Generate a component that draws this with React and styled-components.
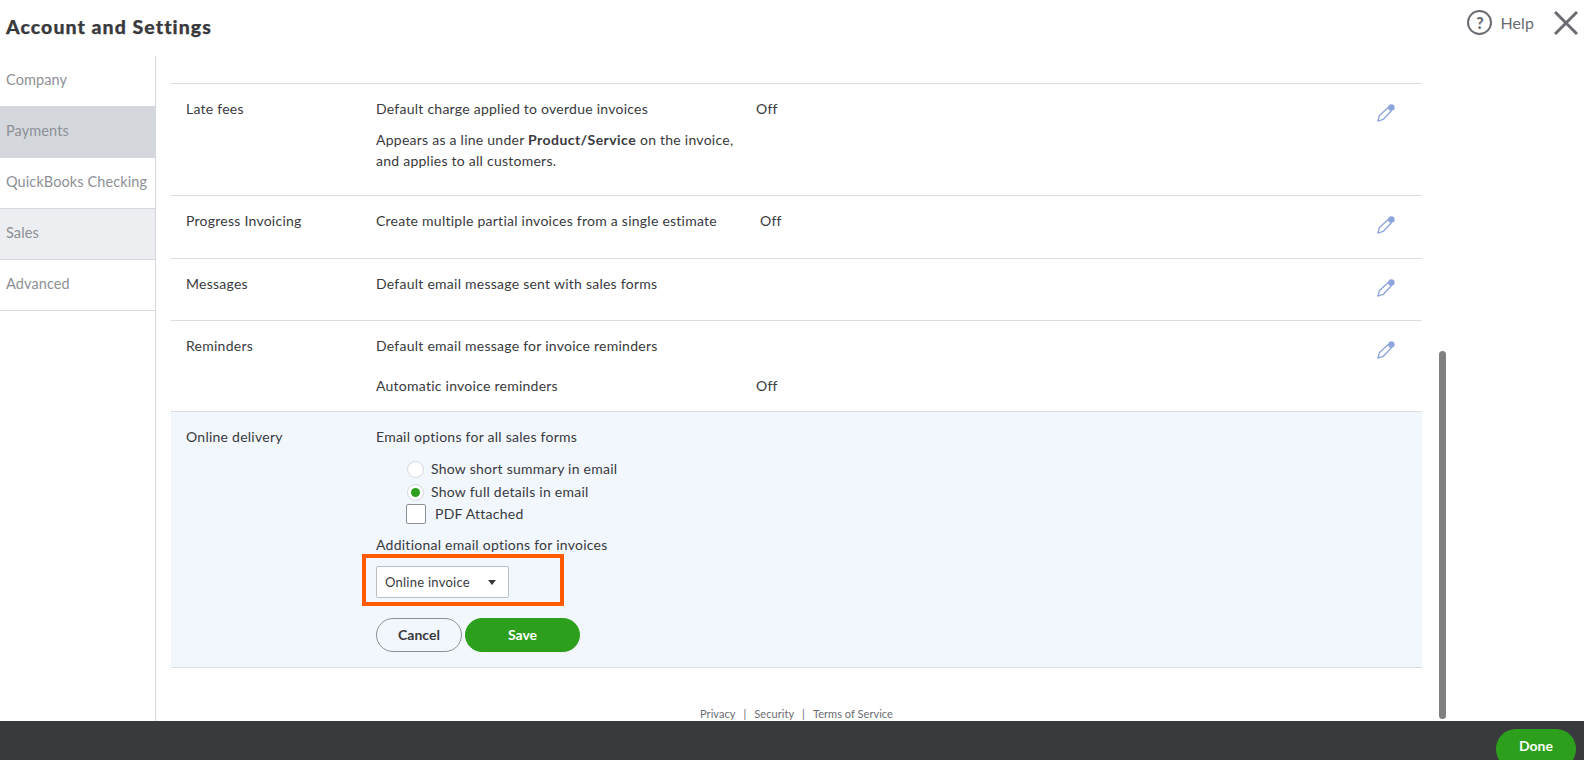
import React from 'react'
import styled, { createGlobalStyle } from 'styled-components'

const GlobalStyle = createGlobalStyle`
  html, body {
    margin: 0;
    padding: 0;
    height: 100%;
    background: #fff;
    font-family: Lato, "Open Sans", sans-serif;
    color: #393a3d;
  }
  * { box-sizing: border-box; }
`

const Page = styled.div`
  height: 100vh;
  display: flex;
  flex-direction: column;
  overflow: hidden;
`

const Header = styled.header`
  height: 56px;
  flex: none;
  display: flex;
  align-items: flex-start;
  justify-content: space-between;
  padding: 16px 6px 0 6px;
`

const Title = styled.h1`
  margin: 0;
  font-size: 19.5px;
  line-height: 22px;
  font-weight: 900;
  letter-spacing: 1.05px;
  -webkit-text-stroke: 0.25px #393a3d;
  color: #393a3d;
`

const HeaderActions = styled.div`
  display: flex;
  align-items: center;
  margin-top: -6px;
`

const HelpIcon = styled.span`
  width: 25px;
  height: 25px;
  border: 2px solid #6b6c72;
  border-radius: 50%;
  display: flex;
  align-items: center;
  justify-content: center;
  color: #6b6c72;
  font-size: 16px;
  font-weight: 900;
  margin-right: 8px;
`

const HelpLabel = styled.span`
  font-size: 16px;
  letter-spacing: 0.1px;
  color: #6b6c72;
  margin-right: 20px;
`

const Body = styled.div`
  flex: 1;
  min-height: 0;
  display: flex;
  position: relative;
`

const Sidebar = styled.nav`
  width: 156px;
  flex: none;
  border-right: 1px solid #d4d7dc;
`

const SideItem = styled.div`
  height: 51px;
  display: flex;
  align-items: center;
  padding: 0 0 3px 6px;
  font-size: 14.5px;
  letter-spacing: 0.1px;
  color: #8d9096;
  border-bottom: 1px solid #d4d7dc;
  background: ${p => p.$bg || '#fff'};
`

const Main = styled.main`
  flex: 1;
  min-width: 0;
  padding: 27px 0 0 15px;
  overflow: hidden;
`

const Content = styled.div`
  width: 1251px;
  border-top: 1px solid #dcdee1;
`

const Row = styled.section`
  display: flex;
  height: ${p => p.$height}px;
  padding: 15px 0 0 15px;
  border-bottom: 1px solid #dcdee1;
  background: ${p => (p.$active ? '#f2f6fd' : 'transparent')};
  font-size: 14px;
  line-height: 20px;
  letter-spacing: 0.25px;

  b { letter-spacing: 0.45px; }
`

const RowLabel = styled.div`
  width: 190px;
  flex: none;
`

const RowBody = styled.div`
  flex: 1;
  min-width: 0;
`

const Setting = styled.div`
  display: flex;
  margin-bottom: ${p => p.$gap || 0}px;
`

const SettingText = styled.div`
  width: ${p => p.$width || 380}px;
  flex: none;
`

const Note = styled.p`
  margin: 10px 0 0;
  width: 362px;
  line-height: 21px;
`

const Value = styled.span`
  color: #393a3d;
`

const EditButton = styled.div`
  flex: none;
  width: 45px;
  padding-top: 5px;
  svg { display: block; }
`

const RadioRow = styled.label`
  display: flex;
  align-items: center;
  height: 22px;
  padding-left: 31px;
  gap: 7px;

  & + & { margin-top: 1px; }
`

const Radio = styled.span`
  width: 17px;
  height: 17px;
  border-radius: 50%;
  background: #fff;
  border: 1px solid #d4d7dc;
  display: flex;
  align-items: center;
  justify-content: center;

  &::after {
    content: '';
    width: 9px;
    height: 9px;
    border-radius: 50%;
    background: ${p => (p.$checked ? '#2ca01c' : 'transparent')};
  }
`

const CheckRow = styled.label`
  display: flex;
  align-items: center;
  height: 20px;
  margin-top: 1px;
  padding-left: 30px;
  gap: 9px;
`

const Checkbox = styled.span`
  width: 20px;
  height: 20px;
  background: #fff;
  border: 1px solid #8d9096;
  border-radius: 2px;
`

const FieldLabel = styled.div`
  margin-top: 11px;
`

const Highlight = styled.div`
  width: 202px;
  height: 52px;
  margin: -1px 0 0 -14px;
  padding: 8px 0 0 10px;
  border: 4px solid #ff5a00;
`

const Select = styled.div`
  width: 133px;
  height: 32px;
  display: flex;
  align-items: center;
  justify-content: space-between;
  padding: 0 12px 0 8px;
  background: #fff;
  border: 1px solid #babec5;
  border-radius: 2px;
  font-size: 13px;
`

const Caret = styled.span`
  width: 0;
  height: 0;
  border-left: 4px solid transparent;
  border-right: 4px solid transparent;
  border-top: 5px solid #393a3d;
`

const Buttons = styled.div`
  display: flex;
  gap: 3px;
  margin-top: 12px;
`

const Pill = styled.button`
  height: 34px;
  width: ${p => p.$width}px;
  padding: 0 0 2px;
  border-radius: 17px;
  border: 1px solid ${p => (p.$primary ? '#2ca01c' : '#8d9096')};
  background: ${p => (p.$primary ? '#2ca01c' : 'transparent')};
  color: ${p => (p.$primary ? '#fff' : '#393a3d')};
  font-family: inherit;
  font-size: 14px;
  font-weight: 700;
`

const Legal = styled.div`
  margin-top: 39px;
  display: flex;
  justify-content: center;
  gap: 8px;
  font-size: 11px;
  letter-spacing: 0.05px;
  line-height: 14px;
  color: #6b6c72;
`

const ScrollThumb = styled.div`
  position: absolute;
  left: 1439px;
  top: 295px;
  width: 7px;
  height: 368px;
  border-radius: 4px;
  background: #808080;
`

const Footer = styled.footer`
  height: 39px;
  flex: none;
  background: #393a3d;
  display: flex;
  justify-content: flex-end;
  padding: 8px 8px 0 0;
`

const DoneButton = styled.button`
  width: 80px;
  height: 40px;
  border: 0;
  border-radius: 20px;
  padding: 0 0 8px;
  background: #2ca01c;
  color: #fff;
  font-family: inherit;
  font-size: 14px;
  font-weight: 700;
`

const Pencil = () => (
  <svg width="18" height="18" viewBox="0 0 17 17" fill="none">
    <path d="M0.8 16.2 L2.2 11 L10.5 3.4 L13.6 6.4 L5.8 14.6 Z" stroke="#8ea4dc" strokeWidth="1.3" strokeLinejoin="round" />
    <circle cx="13.6" cy="3.2" r="3" fill="#8ea4dc" />
  </svg>
)

const CloseIcon = () => (
  <svg width="24" height="24" viewBox="0 0 24 24">
    <path d="M1 1 L23 23 M23 1 L1 23" stroke="#6b6c72" strokeWidth="3" />
  </svg>
)

const App = () => {
  return (
    <Page>
      <GlobalStyle />
      <Header>
        <Title>Account and Settings</Title>
        <HeaderActions>
          <HelpIcon>?</HelpIcon>
          <HelpLabel>Help</HelpLabel>
          <CloseIcon />
        </HeaderActions>
      </Header>
      <Body>
        <Sidebar>
          <SideItem>Company</SideItem>
          <SideItem $bg="#d4d7dc">Payments</SideItem>
          <SideItem>QuickBooks Checking</SideItem>
          <SideItem $bg="#eceef1">Sales</SideItem>
          <SideItem>Advanced</SideItem>
        </Sidebar>
        <Main>
          <Content>
            <Row $height={112}>
              <RowLabel>Late fees</RowLabel>
              <RowBody>
                <Setting>
                  <SettingText>Default charge applied to overdue invoices</SettingText>
                  <Value>Off</Value>
                </Setting>
                <Note>Appears as a line under <b>Product/Service</b> on the invoice, and applies to all customers.</Note>
              </RowBody>
              <EditButton><Pencil /></EditButton>
            </Row>
            <Row $height={63}>
              <RowLabel>Progress Invoicing</RowLabel>
              <RowBody>
                <Setting>
                  <SettingText $width={384}>Create multiple partial invoices from a single estimate</SettingText>
                  <Value>Off</Value>
                </Setting>
              </RowBody>
              <EditButton><Pencil /></EditButton>
            </Row>
            <Row $height={62}>
              <RowLabel>Messages</RowLabel>
              <RowBody>
                <Setting>
                  <SettingText>Default email message sent with sales forms</SettingText>
                </Setting>
              </RowBody>
              <EditButton><Pencil /></EditButton>
            </Row>
            <Row $height={91}>
              <RowLabel>Reminders</RowLabel>
              <RowBody>
                <Setting $gap={20}>
                  <SettingText>Default email message for invoice reminders</SettingText>
                </Setting>
                <Setting>
                  <SettingText>Automatic invoice reminders</SettingText>
                  <Value>Off</Value>
                </Setting>
              </RowBody>
              <EditButton><Pencil /></EditButton>
            </Row>
            <Row $height={256} $active>
              <RowLabel>Online delivery</RowLabel>
              <RowBody>
                <Setting $gap={11}>
                  <SettingText>Email options for all sales forms</SettingText>
                </Setting>
                <RadioRow><Radio />Show short summary in email</RadioRow>
                <RadioRow><Radio $checked />Show full details in email</RadioRow>
                <CheckRow><Checkbox />PDF Attached</CheckRow>
                <FieldLabel>Additional email options for invoices</FieldLabel>
                <Highlight>
                  <Select>Online invoice<Caret /></Select>
                </Highlight>
                <Buttons>
                  <Pill $width={86}>Cancel</Pill>
                  <Pill $width={115} $primary>Save</Pill>
                </Buttons>
              </RowBody>
            </Row>
            <Legal>
              <span>Privacy</span><span>|</span><span>Security</span><span>|</span><span>Terms of Service</span>
            </Legal>
          </Content>
        </Main>
        <ScrollThumb />
      </Body>
      <Footer>
        <DoneButton>Done</DoneButton>
      </Footer>
    </Page>
  )
}

export default App
